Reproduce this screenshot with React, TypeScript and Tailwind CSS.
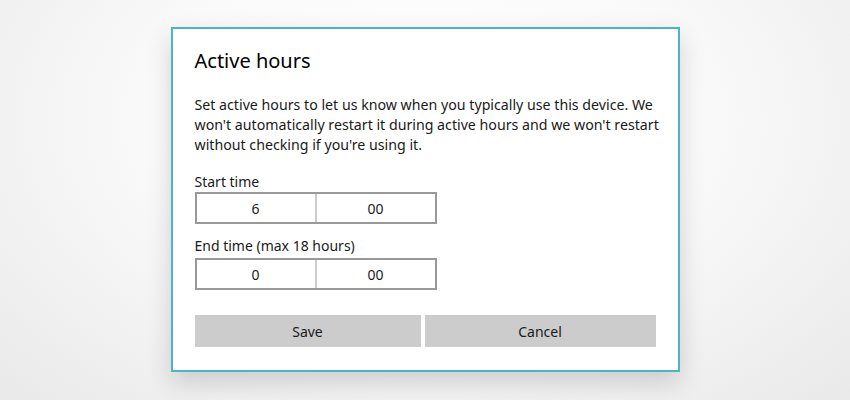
const TimeBox = ({ hour, minute }: { hour: string; minute: string }) => (
  <div className="flex h-[32px] w-[242px] border-2 border-[#999999] bg-white">
    <div className="flex flex-1 items-center justify-center border-r-2 border-[#cccccc]">{hour}</div>
    <div className="flex flex-1 items-center justify-center">{minute}</div>
  </div>
);

export default function App() {
  return (
    <div
      className="flex h-[400px] w-full justify-center bg-[radial-gradient(ellipse_at_50%_30%,#ffffff_0%,#fafafa_45%,#e9e9e9_100%)] pt-[27px] text-[#1a1a1a]"
      style={{ fontFamily: '"Noto Sans", "Open Sans", sans-serif' }}
    >
      <div className="h-[345px] w-[509px] bg-[#4ab7c0] p-[2px] shadow-[0_10px_24px_rgba(0,0,0,0.16)]">
        <div className="h-full w-full bg-white px-[22px] pt-[16px]">
          <h1 className="text-[20px] leading-[32px] text-black">Active hours</h1>
          <p className="mt-[18px] whitespace-nowrap text-[14.2px] leading-[20px]">
            Set active hours to let us know when you typically use this device. We
            <br />
            won't automatically restart it during active hours and we won't restart
            <br />
            without checking if you're using it.
          </p>
          <div className="mt-[17px] text-[14px]">
            <div className="leading-[20px]">Start time</div>
            <TimeBox hour="6" minute="00" />
            <div className="mt-[12px] leading-[20px]">End time (max 18 hours)</div>
            <div className="mt-[2px]">
              <TimeBox hour="0" minute="00" />
            </div>
          </div>
          <div className="mt-[25px] flex gap-[4px] text-[14px]">
            <button className="h-[32px] w-[226px] bg-[#cccccc]">Save</button>
            <button className="h-[32px] flex-1 bg-[#cccccc]">Cancel</button>
          </div>
        </div>
      </div>
    </div>
  );
}
